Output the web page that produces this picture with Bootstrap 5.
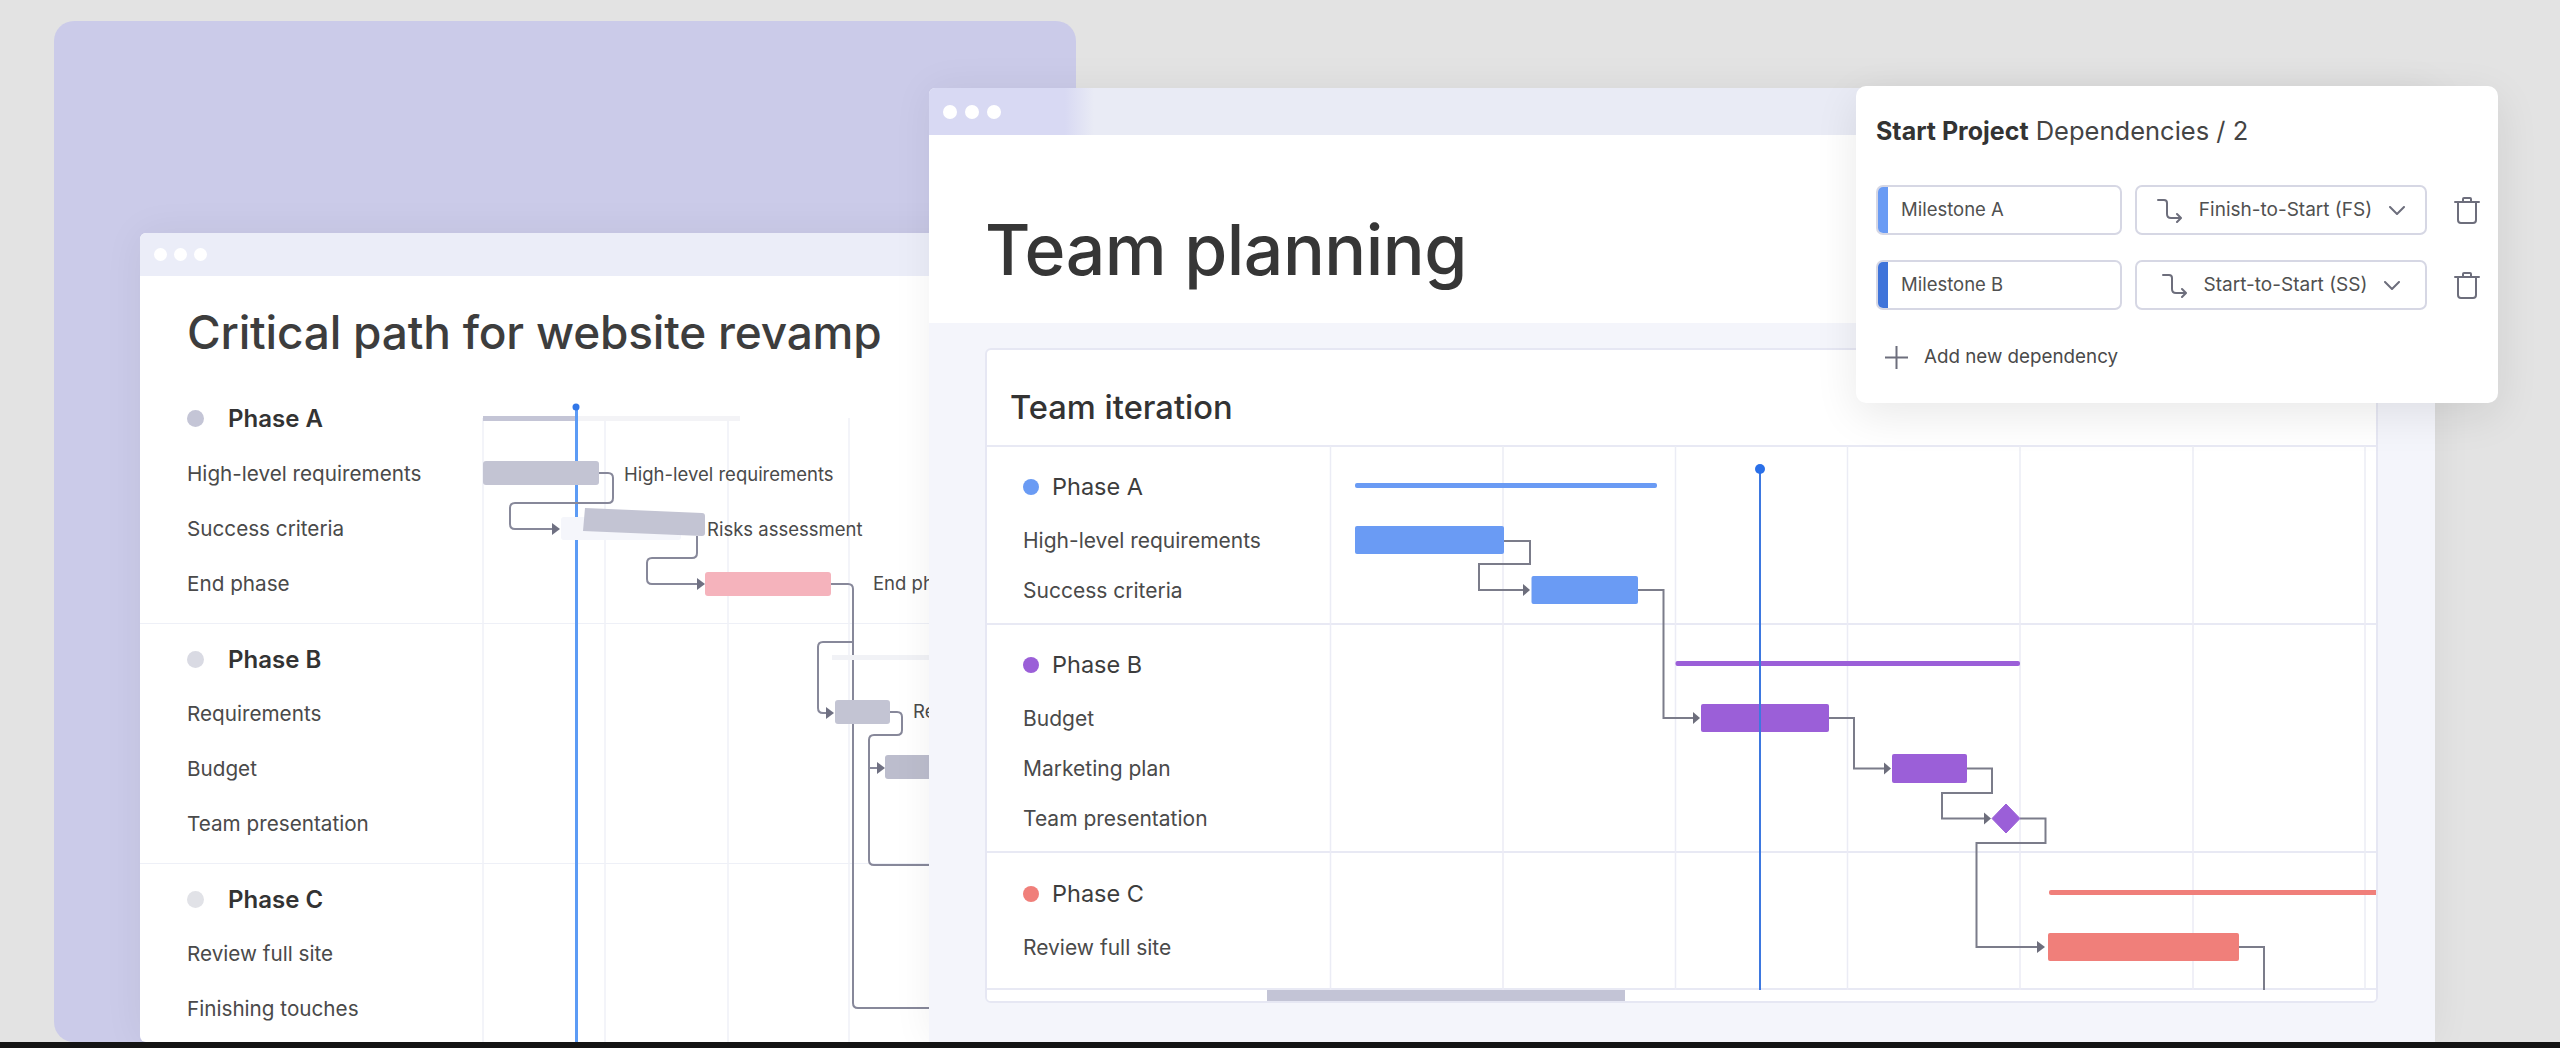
<!DOCTYPE html>
<html lang="en">
<head>
    <meta charset="UTF-8">
    <meta name="viewport" content="width=device-width, initial-scale=1.0">
    <title>Team planning</title>
    <link href="https://cdn.jsdelivr.net/npm/bootstrap@5.3.3/dist/css/bootstrap.min.css" rel="stylesheet">
    <style>
        body {
            background: #e3e3e3;
            font-family: Inter, "Open Sans", sans-serif;
            color: #444;
            overflow: hidden;
        }
        .stage { position: relative; width: 2560px; height: 1042px; overflow: hidden; }
        .end-bar { height: 6px; background: #141414; }

        .lav-panel { position: absolute; left: 54px; top: 21px; width: 1022px; height: 1021px; background: #cbcbe9; border-radius: 20px; }

        .win-left, .win-right { position: absolute; overflow: hidden; background: #fff; box-shadow: 0 0 40px rgba(0, 0, 0, .06); }
        .win-left { left: 140px; top: 233px; width: 920px; height: 809px; border-radius: 6px; }
        .win-right { left: 929px; top: 88px; width: 1506px; height: 954px; border-radius: 6px 6px 0 0; background: #f4f5fb; }

        .left-bar { height: 43px; background: #ebedf8; padding-left: 14px; gap: 7px; }
        .left-bar .win-dot { width: 13px; height: 13px; }
        .right-bar { height: 47px; background: linear-gradient(90deg, #d8d9f3 0, #d8d9f3 136px, #e9ebf5 165px); padding-left: 14px; gap: 8px; }
        .right-bar .win-dot { width: 14px; height: 14px; }
        .win-dot { background: #fff; border-radius: 50%; }

        .left-title { height: 108px; padding: 6px 0 0 47px; margin: 0; font-size: 46px; font-weight: 500; color: #3d3d3d; letter-spacing: -.2px; }
        .left-group { border-bottom: 1px solid #eef0f7; padding: 7px 0 12px 47px; }
        .left-group:last-of-type { border-bottom: 0; }
        .left-group + .left-group .left-phase { padding-top: 2px; }
        .left-row { height: 55px; font-size: 20.7px; color: #4a4a4a; }
        .phase-dot { width: 17px; height: 17px; border-radius: 50%; }
        .left-row.left-phase { font-size: 24px; font-weight: 600; color: #333; gap: 24px; }

        .right-head { height: 188px; background: #fff; padding: 42px 0 0 56px; }
        .right-title { margin: 0; font-size: 69.7px; font-weight: 500; color: #363636; letter-spacing: -.5px; }
        .right-body { padding: 25px 57px 0 56px; }
        .plan-card { position: relative; height: 655px; border: 2px solid #e6e7f3; border-radius: 6px; overflow: hidden; --bs-card-border-width: 0; }
        .plan-head { height: 97px; padding: 20px 0 0 23px; border-bottom: 2px solid #e8e9f4; font-size: 32.7px; font-weight: 500; color: #333; }
        .plan-rows { flex: 1 1 0; }
        .plan-group { border-bottom: 2px solid #e8e9f4; padding: 20px 0 7px 36px; }
        .plan-group:last-child { border-bottom: 0; flex-grow: 1; padding-top: 21px; }
        .plan-phase { height: 40px; margin-bottom: 9px; gap: 13px; font-size: 23.5px; color: #3d3d3d; }
        .plan-row { height: 50px; font-size: 21px; color: #4a4a4a; }
        .plan-dot { width: 16px; height: 16px; border-radius: 50%; }
        .plan-scroll { height: 13px; background: #fff; border-top: 2px solid #e8e9f4; }
        .plan-thumb { width: 358px; height: 100%; margin-left: 280px; background: #c3c4d6; }

        .gantt { position: absolute; left: 0; top: 0; pointer-events: none; }
        .plan-card .gantt { left: -2px; top: -2px; }
        .gantt text { font-family: Inter, "Open Sans", sans-serif; font-size: 18.5px; fill: #4a4a4a; }

        .dep-pop { position: absolute; left: 1856px; top: 86px; width: 642px; height: 317px; padding: 27px 18px 0 20px; background: #fff; border-radius: 10px; box-shadow: 0 12px 44px rgba(0, 0, 0, .09); }
        .dep-title { height: 36px; margin-bottom: 36px; font-size: 25.5px; color: #444; }
        .dep-title b { font-weight: 700; font-size: 25px; color: #333; }
        .dep-row { height: 50px; margin-bottom: 25px; gap: 13px; }
        .dep-field { height: 50px; border: 2px solid #d6d7e4; border-radius: 7px; font-size: 18.5px; color: #505050; }
        .dep-name { width: 246px; overflow: hidden; }
        .dep-mark { width: 10px; height: 100%; margin-right: 13px; }
        .dep-type { width: 292px; gap: 17px; font-size: 19px; }
        .dep-add { height: 44px; padding-left: 9px; gap: 16px; font-size: 18.8px; color: #4a4a4a; }
        .ico-line { fill: none; stroke: #6d6e7c; stroke-width: 2; stroke-linecap: round; stroke-linejoin: round; }
    </style>
</head>
<body>
<div class="stage">
    <div class="lav-panel"></div>

    <!-- critical path window -->
    <div class="win-left d-flex flex-column">
        <div class="left-bar d-flex align-items-center flex-shrink-0">
            <span class="win-dot"></span><span class="win-dot"></span><span class="win-dot"></span>
        </div>
        <h2 class="left-title d-flex align-items-center flex-shrink-0">Critical path for website revamp</h2>
        <div class="left-group">
            <div class="left-row left-phase d-flex align-items-center"><span class="phase-dot" style="background:#c4c5d6"></span>Phase A</div>
            <div class="left-row d-flex align-items-center">High-level requirements</div>
            <div class="left-row d-flex align-items-center">Success criteria</div>
            <div class="left-row d-flex align-items-center">End phase</div>
        </div>
        <div class="left-group">
            <div class="left-row left-phase d-flex align-items-center"><span class="phase-dot" style="background:#d9dae3"></span>Phase B</div>
            <div class="left-row d-flex align-items-center">Requirements</div>
            <div class="left-row d-flex align-items-center">Budget</div>
            <div class="left-row d-flex align-items-center">Team presentation</div>
        </div>
        <div class="left-group">
            <div class="left-row left-phase d-flex align-items-center"><span class="phase-dot" style="background:#e1e2e7"></span>Phase C</div>
            <div class="left-row d-flex align-items-center">Review full site</div>
            <div class="left-row d-flex align-items-center">Finishing touches</div>
        </div>
        <!-- viewBox uses page coordinates -->
        <svg class="gantt" width="920" height="809" viewBox="140 233 920 809">
            <g stroke="#f0f1f7" stroke-width="1.5">
                <path d="M483 418V1042M605 418V1042M728 418V1042M849 418V1042"/>
            </g>
            <rect x="576" y="416" width="164" height="5" fill="#f3f3f6"/>
            <rect x="483" y="416" width="93" height="5" fill="#c4c5d6"/>
            <rect x="575" y="408" width="3" height="634" fill="#5c9bf5"/>
            <circle cx="576" cy="407" r="3.5" fill="#3277e8"/>
            <g fill="none" stroke="#87889a" stroke-width="2">
                <path d="M599 473H608Q613 473 613 478V498Q613 503 608 503H515Q510 503 510 508V524Q510 529 515 529H553"/>
                <path d="M697 536V553Q697 558 692 558H652Q647 558 647 563V579Q647 584 652 584H698"/>
                <path d="M831 584H848Q853 584 853 589V1003Q853 1008 858 1008H1060"/>
                <path d="M853 642H823Q818 642 818 647V708Q818 713 823 713H827"/>
                <path d="M890 712H897Q902 712 902 717V730Q902 735 897 735H874Q869 735 869 740V860Q869 865 874 865H1060"/>
                <path d="M869 768H878"/>
            </g>
            <g fill="#6f7082">
                <path d="M552 523L560 529L552 535Z"/>
                <path d="M697 578L705 584L697 590Z"/>
                <path d="M826 707L834 713L826 719Z"/>
                <path d="M877 762L885 768L877 774Z"/>
            </g>
            <rect x="561" y="517" width="120" height="23" rx="3" fill="#f5f6fb"/>
            <rect x="483" y="461" width="116" height="24" rx="3" fill="#c3c4d3"/>
            <path d="M585 508L702 513Q705 513 705 516V533Q705 536 702 536L583 531Z" fill="#c3c4d3"/>
            <rect x="705" y="572" width="126" height="24" rx="3" fill="#f5b3bc"/>
            <rect x="832" y="655" width="228" height="5" fill="#f1f2f6"/>
            <rect x="835" y="700" width="55" height="24" rx="3" fill="#c3c4d3"/>
            <rect x="885" y="755" width="175" height="24" rx="3" fill="#bcbdcd"/>
            <text x="624" y="481">High-level requirements</text>
            <text x="707" y="536">Risks assessment</text>
            <text x="873" y="590">End phase</text>
            <text x="913" y="718">Requirements</text>
        </svg>
    </div>

    <!-- team planning window -->
    <div class="win-right d-flex flex-column">
        <div class="right-bar d-flex align-items-center flex-shrink-0">
            <span class="win-dot"></span><span class="win-dot"></span><span class="win-dot"></span>
        </div>
        <div class="right-head flex-shrink-0 d-flex align-items-center">
            <h1 class="right-title">Team planning</h1>
        </div>
        <div class="right-body">
            <div class="card plan-card">
                <div class="plan-head d-flex align-items-center">Team iteration</div>
                <div class="plan-rows d-flex flex-column">
                    <div class="plan-group">
                        <div class="plan-phase d-flex align-items-center"><span class="plan-dot" style="background:#6a9bf4"></span>Phase A</div>
                        <div class="plan-row d-flex align-items-center">High-level requirements</div>
                        <div class="plan-row d-flex align-items-center">Success criteria</div>
                    </div>
                    <div class="plan-group">
                        <div class="plan-phase d-flex align-items-center"><span class="plan-dot" style="background:#9b5fd8"></span>Phase B</div>
                        <div class="plan-row d-flex align-items-center">Budget</div>
                        <div class="plan-row d-flex align-items-center">Marketing plan</div>
                        <div class="plan-row d-flex align-items-center">Team presentation</div>
                    </div>
                    <div class="plan-group">
                        <div class="plan-phase d-flex align-items-center"><span class="plan-dot" style="background:#f07f7a"></span>Phase C</div>
                        <div class="plan-row d-flex align-items-center">Review full site</div>
                    </div>
                </div>
                <div class="plan-scroll"><div class="plan-thumb"></div></div>
                <svg class="gantt" width="1393" height="655" viewBox="985 348 1393 655">
                    <path d="M1330.5 446V990M1503 446V990M1675.5 446V990M1847.5 446V990M2020 446V990M2193 446V990M2365 446V990" stroke="#ebecf5" stroke-width="1.5" fill="none"/>
                    <g fill="none" stroke="#7b7c8a" stroke-width="2">
                        <path d="M1504 541H1530V564H1479V590H1524"/>
                        <path d="M1638 590H1663.5V718H1694"/>
                        <path d="M1829 718H1854V768.5H1886"/>
                        <path d="M1967 768.5H1992V793H1942V818.5H1986"/>
                        <path d="M2020 818.5H2045.5V843H1976.5V947H2040"/>
                        <path d="M2239 947H2264V990"/>
                    </g>
                    <g fill="#6d6e7c">
                        <path d="M1523 584L1530 590L1523 596Z"/>
                        <path d="M1693 712L1700 718L1693 724Z"/>
                        <path d="M1884 762.5L1891 768.5L1884 774.5Z"/>
                        <path d="M1984 812.5L1991 818.5L1984 824.5Z"/>
                        <path d="M2037 941L2045 947L2037 953Z"/>
                    </g>
                    <rect x="1355" y="483" width="302" height="5" rx="2" fill="#6a9bf4"/>
                    <rect x="1355" y="526" width="149" height="28" rx="2" fill="#6a9bf4"/>
                    <rect x="1531.5" y="576" width="106.5" height="28" rx="2" fill="#6a9bf4"/>
                    <rect x="1675.5" y="661" width="344.5" height="5" rx="2" fill="#9b5fd8"/>
                    <rect x="1701" y="704" width="128" height="28" rx="2" fill="#9b5fd8"/>
                    <rect x="1892" y="754" width="75" height="29" rx="2" fill="#9b5fd8"/>
                    <path d="M2006 804L2020 818.5L2006 833L1992 818.5Z" fill="#9b5fd8" stroke="#9b5fd8" stroke-width="1" stroke-linejoin="round"/>
                    <rect x="2049" y="890" width="340" height="5" rx="2" fill="#f07f7a"/>
                    <rect x="2048" y="933" width="191" height="28" rx="2" fill="#f07f7a"/>
                    <rect x="1759" y="469" width="2" height="521" fill="#3d78e0"/>
                    <circle cx="1760" cy="469" r="5" fill="#2a6fe8"/>
                </svg>
            </div>
        </div>
    </div>

    <!-- dependencies popover -->
    <div class="dep-pop">
        <div class="dep-title d-flex align-items-center"><span><b>Start Project</b> Dependencies / 2</span></div>
        <div class="dep-row d-flex align-items-center">
            <div class="dep-field dep-name d-flex align-items-center"><span class="dep-mark" style="background:#6a9bf4"></span>Milestone A</div>
            <div class="dep-field dep-type d-flex align-items-center justify-content-center">
                <svg width="25" height="25" viewBox="0 0 25 25"><path class="ico-line" d="M1 2H7Q10 2 10 5V16Q10 20 14 20H23M20 16L24 20L20 24"/></svg>
                <span>Finish-to-Start (FS)</span>
                <svg width="16" height="9" viewBox="0 0 16 9"><path class="ico-line" d="M1 1L8 8L15 1"/></svg>
            </div>
            <svg class="ms-auto" width="26" height="27" viewBox="0 0 26 27"><path class="ico-line" d="M1 5H25M9 5V2Q9 1 10 1H16Q17 1 17 2V5M4 5V23Q4 26 7 26H19Q22 26 22 23V5"/></svg>
        </div>
        <div class="dep-row d-flex align-items-center">
            <div class="dep-field dep-name d-flex align-items-center"><span class="dep-mark" style="background:#3f74da"></span>Milestone B</div>
            <div class="dep-field dep-type d-flex align-items-center justify-content-center">
                <svg width="25" height="25" viewBox="0 0 25 25"><path class="ico-line" d="M1 2H7Q10 2 10 5V16Q10 20 14 20H23M20 16L24 20L20 24"/></svg>
                <span>Start-to-Start (SS)</span>
                <svg width="16" height="9" viewBox="0 0 16 9"><path class="ico-line" d="M1 1L8 8L15 1"/></svg>
            </div>
            <svg class="ms-auto" width="26" height="27" viewBox="0 0 26 27"><path class="ico-line" d="M1 5H25M9 5V2Q9 1 10 1H16Q17 1 17 2V5M4 5V23Q4 26 7 26H19Q22 26 22 23V5"/></svg>
        </div>
        <div class="dep-add d-flex align-items-center">
            <svg width="23" height="23" viewBox="0 0 23 23"><path class="ico-line" d="M11.5 0V23M0 11.5H23"/></svg>
            <span>Add new dependency</span>
        </div>
    </div>
</div>
<div class="end-bar"></div>
<script src="https://cdn.jsdelivr.net/npm/bootstrap@5.3.3/dist/js/bootstrap.bundle.min.js"></script>
</body>
</html>
